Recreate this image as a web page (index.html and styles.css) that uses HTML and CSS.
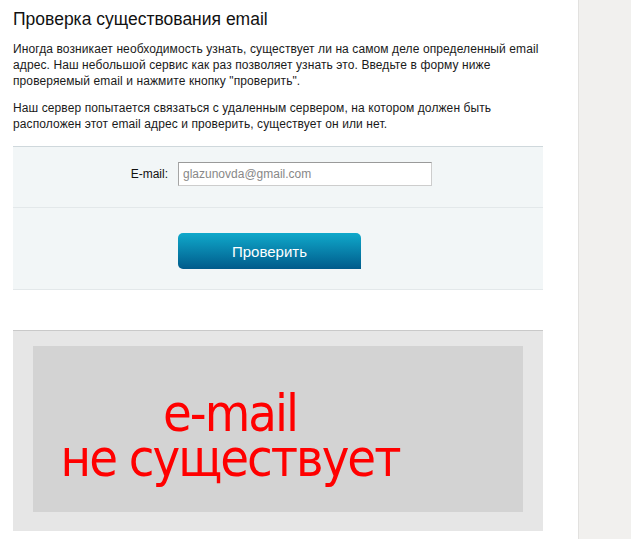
FILE: index.html
```html
<!DOCTYPE html>
<html lang="ru">
<head>
  <meta charset="UTF-8">
  <title>Проверка существования email</title>
  <link rel="stylesheet" href="styles.css">
</head>
<body>
  <div class="page">
    <div class="content">
      <h1>Проверка существования email</h1>
      <p>Иногда возникает необходимость узнать, существует ли на самом деле определенный email адрес. Наш небольшой сервис как раз позволяет узнать это. Введьте в форму ниже проверяемый email и нажмите кнопку "проверить".</p>
      <p>Наш сервер попытается связаться с удаленным сервером, на котором должен быть расположен этот email адрес и проверить, существует он или нет.</p>

      <!-- форма проверки -->
      <form class="check-form" onsubmit="return false">
        <div class="row">
          <label for="email">E-mail:</label>
          <input type="text" id="email" name="email" value="glazunovda@gmail.com">
        </div>
        <div class="row row-btn">
          <button type="submit">Проверить</button>
        </div>
      </form>

      <!-- результат -->
      <div class="result">
        <div class="result-inner">e-mail<br>не существует</div>
      </div>
    </div>
    <div class="sidebar"></div>
  </div>
</body>
</html>
```

FILE: styles.css
```css
body { margin: 0; font-family: "Liberation Sans", Arial, sans-serif; color: #111; background: #fff; }
.page { display: flex; min-height: 539px; }
.content { width: 530px; padding: 0 35px 0 13px; }
.sidebar { flex: 1; background: #f1f0ee; border-left: 1px solid #e2e1df; }
h1 { font-size: 17.5px; font-weight: normal; margin: 8px 0 11px; line-height: 22px; }
p { font-size: 12px; line-height: 16px; margin: 0 0 11px; color: #1a1a1a; letter-spacing: 0.1px; }
.check-form { margin-top: 14px; border-top: 1px solid #cfd8dc; border-bottom: 1px solid #e3e8ea; background: #f2f6f7; }
.row { display: flex; align-items: center; height: 60px; padding-bottom: 6px; box-sizing: border-box; }
.row label { width: 155px; text-align: right; padding-right: 10px; font-size: 12px; }
.row input { width: 244px; height: 22px; padding: 0 4px; border: 1px solid #cdcdcd; border-top-color: #9a9a9a; border-left-color: #a5a5a5; font: 12px "Liberation Sans", Arial, sans-serif; color: #888; background: #fff; }
.row-btn { height: 82px; padding-bottom: 0; border-top: 1px solid #e3e8ea; align-items: flex-start; }
.row-btn button { margin: 25px 0 0 165px; width: 183px; height: 36px; border: 0; border-radius: 5px 5px 0 5px; background: linear-gradient(#10a9cb, #005b8b); color: #fff; font: 15px "Liberation Sans", Arial, sans-serif; }
.result { margin-top: 40px; border-top: 1px solid #c9c9c9; background: #e6e6e6; padding: 15px 20px 19px; }
.result-inner { background: #d3d3d3; height: 166px; display: flex; align-items: center; justify-content: center; text-align: center; color: #ff0000; font: 52px/45px "DejaVu Sans Condensed", "DejaVu Sans", sans-serif; letter-spacing: -2px; padding: 13px 96px 0 0; box-sizing: border-box; }
```
